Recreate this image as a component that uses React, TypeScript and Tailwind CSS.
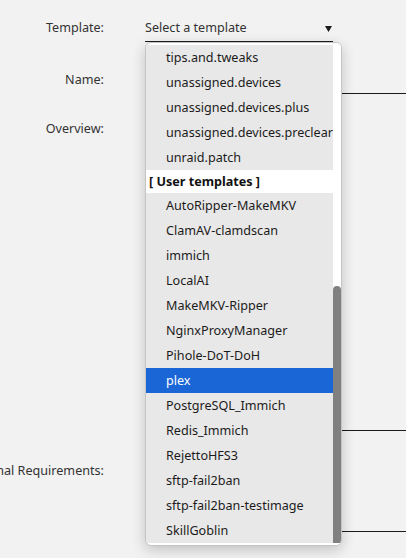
import React from "react";

const system = [
  "tips.and.tweaks",
  "unassigned.devices",
  "unassigned.devices.plus",
  "unassigned.devices.preclear",
  "unraid.patch",
];

const user = [
  "AutoRipper-MakeMKV",
  "ClamAV-clamdscan",
  "immich",
  "LocalAI",
  "MakeMKV-Ripper",
  "NginxProxyManager",
  "Pihole-DoT-DoH",
  "plex",
  "PostgreSQL_Immich",
  "Redis_Immich",
  "RejettoHFS3",
  "sftp-fail2ban",
  "sftp-fail2ban-testimage",
  "SkillGoblin",
];

function Option({ label, selected }: { label: string; selected?: boolean }) {
  return (
    <div
      className={`h-[25px] pl-[20px] leading-[25px] whitespace-nowrap ${
        selected ? "bg-[#1a66d6] text-white" : "bg-[#e8e8e8] text-[#1c1b1b]"
      }`}
    >
      {label}
    </div>
  );
}

export default function App() {
  return (
    <div className="relative h-[558px] w-[406px] overflow-hidden bg-[#f2f2f2] font-['Noto_Sans',sans-serif] text-[12.6px] text-[#333]">
      <div className="pt-[15px]">
        {/* Template */}
        <div className="flex">
          <div className="w-[104px] shrink-0 text-right leading-[25px]">Template:</div>
          <div className="ml-[41px] flex h-[27px] w-[188px] items-center justify-between border-b border-[#1c1b1b]">
            <span className="leading-[24px]">Select a template</span>
            <svg width="7" height="7" viewBox="0 0 7 7" className="mr-[1px]">
              <polygon points="0,1 7,1 3.5,7" fill="#1c1b1b" />
            </svg>
          </div>
        </div>

        {/* Name */}
        <div className="mt-[25px] flex">
          <div className="w-[104px] shrink-0 text-right leading-[26px]">Name:</div>
          <div className="ml-[41px] h-[27px] flex-1 border-b border-[#1c1b1b]" />
        </div>

        {/* Overview */}
        <div className="mt-[22px] flex">
          <div className="w-[104px] shrink-0 text-right leading-[26px]">Overview:</div>
          <div className="ml-[41px] h-[315px] flex-1 border-b border-[#1c1b1b]" />
        </div>

        {/* Additional Requirements */}
        <div className="mt-[27px] flex">
          <div className="flex w-[104px] shrink-0 justify-end whitespace-nowrap leading-[26px]">
            <span>Additional Requirements:</span>
          </div>
          <div className="ml-[41px] h-[74px] flex-1 border-b border-[#1c1b1b]" />
        </div>
      </div>

      {/* Open dropdown */}
      <div className="absolute left-[145px] top-[42px] h-[504px] w-[197px] overflow-hidden rounded-[6px] border border-[#c4c4c4] bg-white shadow-[0_4px_14px_rgba(0,0,0,0.2)]">
        <div className="flex h-full">
          <div className="w-[187px] overflow-hidden">
            <div className="mt-[2px]">
              {system.map((s) => (
                <Option key={s} label={s} />
              ))}
              <div className="h-[23px] bg-white pl-[3px] font-bold leading-[23px] text-[#111]">
                [ User templates ]
              </div>
              {user.map((u) => (
                <Option key={u} label={u} selected={u === "plex"} />
              ))}
            </div>
          </div>
          <div className="relative w-[8px] bg-white">
            <div className="absolute left-0 top-[243px] h-[257px] w-[8px] rounded-t-[4px] bg-[#808080]" />
          </div>
        </div>
      </div>
    </div>
  );
}
